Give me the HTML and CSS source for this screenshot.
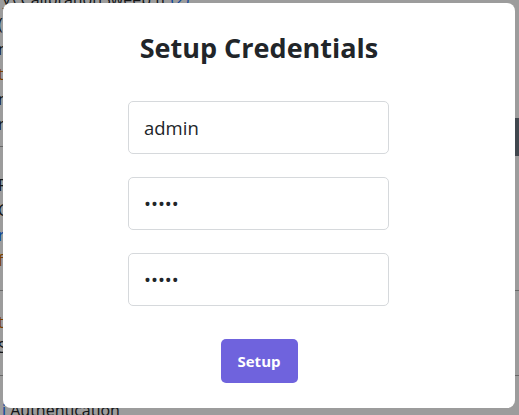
FILE: index.html
```html
<!DOCTYPE html>
<html>
<head>
<meta charset="utf-8">
<link rel="stylesheet" href="styles.css">
</head>
<body>
<div class="page">
  <div class="line top">ry\ CalibrationSweep.tt <span class="blue">(2)</span></div>
  <div class="group">
    <div class="line">(</div>
    <div class="line">n</div>
    <div class="line orange">t</div>
    <div class="line">n</div>
    <div class="line">r</div>
  </div>
  <div class="rule r1"></div>
  <div class="group">
    <div class="line">R</div>
    <div class="line">C</div>
    <div class="line blue">r</div>
    <div class="line orange">fi</div>
  </div>
  <div class="rule r2"></div>
  <div class="group">
    <div class="line orange">t</div>
    <div class="line">S</div>
  </div>
  <div class="rule r3"></div>
  <div class="line bottom"><span class="blue">i</span> Authentication</div>
  <div class="side"></div>
</div>
<div class="backdrop"></div>
<div class="modal">
  <h2 class="title">Setup Credentials</h2>
  <form class="form">
    <input class="field" type="text" value="admin">
    <input class="field" type="password" value="admin">
    <input class="field" type="password" value="admin">
    <button class="btn" type="button">Setup</button>
  </form>
</div>
</body>
</html>
```
FILE: styles.css
```css
html, body {
  margin: 0;
  padding: 0;
  width: 519px;
  height: 415px;
  overflow: hidden;
}
body {
  background: #fff;
  font-family: "Open Sans", "Noto Sans", sans-serif;
  color: #212529;
}
.page {
  font-size: 16px;
  line-height: 25px;
}
.line {
  height: 25px;
  margin-left: -2px;
  white-space: nowrap;
}
.line.top { margin-top: -13px; margin-left: -4px; }
.blue { color: #0d6efd; }
.orange { color: #c76b00; }
.rule {
  height: 1px;
  background: #aaa;
}
.rule.r1 { margin: 9px 0 26px 0; }
.rule.r2 { margin: 17px 0 19px 0; }
.rule.r3 { margin: 15px 0 0 0; }
.line.bottom { margin-left: 2px; margin-top: 22px; }
.side {
  position: absolute;
  right: 0;
  top: 118px;
  width: 8px;
  height: 38px;
  background: #6a7580;
}
.backdrop {
  position: fixed;
  inset: 0;
  background: rgba(0, 0, 0, 0.39);
}
.modal {
  position: fixed;
  left: 3px;
  top: 3px;
  width: 512px;
  height: 405px;
  background: #fff;
  border-radius: 8px;
  box-sizing: border-box;
  display: flex;
  flex-direction: column;
  align-items: center;
}
.title {
  margin: 26px 0 0 0;
  font-size: 27px;
  line-height: 38px;
  font-weight: 700;
  color: #212529;
}
.form {
  margin-top: 34px;
  display: flex;
  flex-direction: column;
  align-items: center;
  gap: 23px;
}
.field {
  width: 261px;
  height: 53px;
  box-sizing: border-box;
  border: 1px solid #d6d9dc;
  border-radius: 5px;
  padding: 0 15px;
  font-family: "Open Sans", "Noto Sans", sans-serif;
  font-size: 18.5px;
  color: #212529;
  background: #fff;
  outline: none;
  margin-left: -1px;
}
.btn {
  margin-top: 10px;
  width: 77px;
  height: 44px;
  border: none;
  border-radius: 5px;
  background: #6f63dd;
  color: #fff;
  font-family: "Open Sans", "Noto Sans", sans-serif;
  font-weight: 700;
  font-size: 15px;
}
```
